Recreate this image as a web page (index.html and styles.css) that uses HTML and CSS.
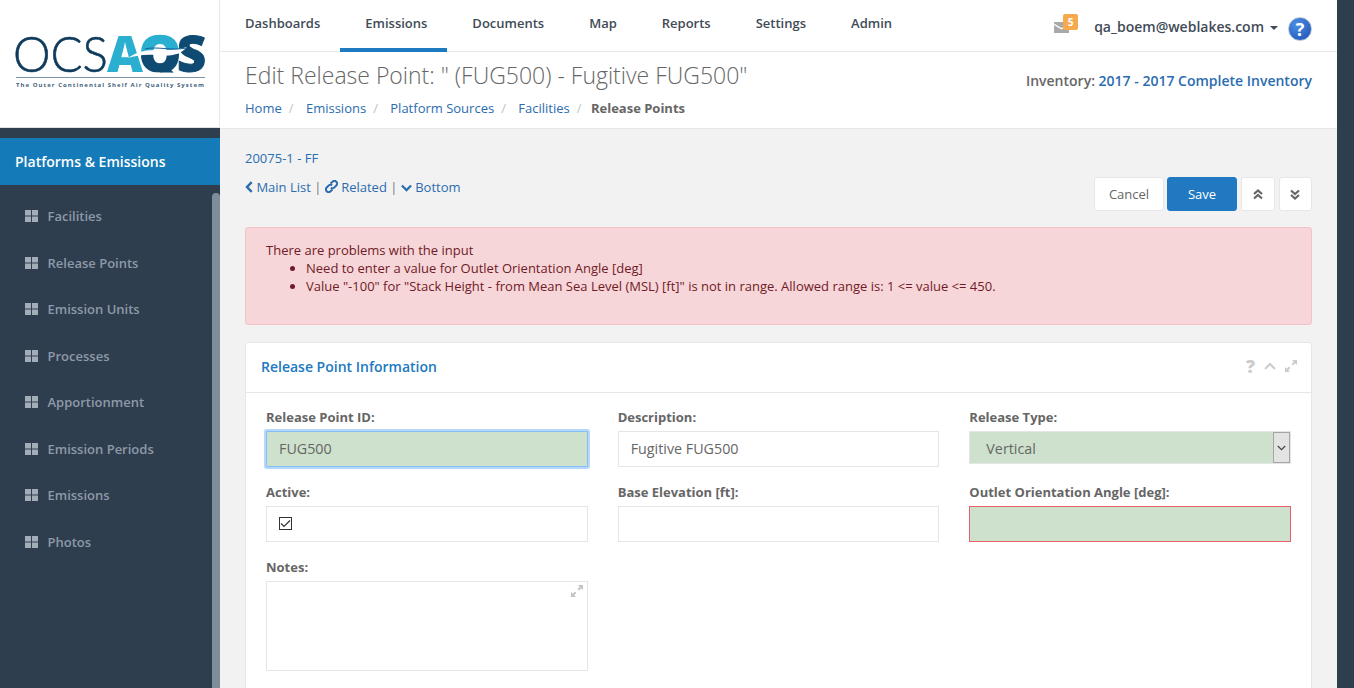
FILE: index.html

```html
<!DOCTYPE html>
<html>
<head>
  <title>Edit Release Point</title>
  <link rel="stylesheet" href="styles.css">
</head>
<body>
  <div class="app">
    <aside class="sidebar">
      <div class="logo">
        <svg width="195" height="76" viewBox="-3 0 195 76">
          <defs>
            <linearGradient id="qfill" gradientUnits="userSpaceOnUse" x1="0" y1="0" x2="0" y2="60">
              <stop offset="0.62" stop-color="#2aafd0"/>
              <stop offset="0.62" stop-color="#0e4a72"/>
            </linearGradient>
            <clipPath id="qclip"><rect x="120" y="0" width="50" height="55.500"/></clipPath>
          </defs>
          <text x="-2" y="55" class="logo-thin" textLength="95" lengthAdjust="spacingAndGlyphs">OCS</text>
          <text x="92" y="55" class="logo-a" textLength="36" lengthAdjust="spacingAndGlyphs">A</text>
          <g clip-path="url(#qclip)">
            <text x="124" y="55" class="logo-q" fill="url(#qfill)" stroke="url(#qfill)" textLength="42" lengthAdjust="spacingAndGlyphs">Q</text>
          </g>
          <text x="162" y="55" class="logo-s" textLength="29" lengthAdjust="spacingAndGlyphs">S</text>
          <path d="M113 41 C120 36 128 33 140 33 C150 33 160 34 172 30 C165 38 155 40 140 38 C130 37 120 39 113 41Z" fill="#fff"/>
          <path d="M130 32 C142 29 155 34 172 31" stroke="#1c5f9a" stroke-width="1" fill="none"/>
          <path d="M1 60.500 H190" stroke="#7d93a8" stroke-width="1"/>
          <text x="1" y="70" class="logo-tag" textLength="188">The Outer Continental Shelf Air Quality System</text>
        </svg>
      </div>
      <div class="side-body">
        <div class="side-title">Platforms &amp; Emissions</div>
        <ul class="side-menu">
          <li><svg class="grid-icon" viewBox="0 0 13 12"><path d="M0 0h6v5.500H0zM7 0h6v5.500H7zM0 6.500h6V12H0zM7 6.500h6V12H7z"/></svg>Facilities</li>
          <li><svg class="grid-icon" viewBox="0 0 13 12"><path d="M0 0h6v5.500H0zM7 0h6v5.500H7zM0 6.500h6V12H0zM7 6.500h6V12H7z"/></svg>Release Points</li>
          <li><svg class="grid-icon" viewBox="0 0 13 12"><path d="M0 0h6v5.500H0zM7 0h6v5.500H7zM0 6.500h6V12H0zM7 6.500h6V12H7z"/></svg>Emission Units</li>
          <li><svg class="grid-icon" viewBox="0 0 13 12"><path d="M0 0h6v5.500H0zM7 0h6v5.500H7zM0 6.500h6V12H0zM7 6.500h6V12H7z"/></svg>Processes</li>
          <li><svg class="grid-icon" viewBox="0 0 13 12"><path d="M0 0h6v5.500H0zM7 0h6v5.500H7zM0 6.500h6V12H0zM7 6.500h6V12H7z"/></svg>Apportionment</li>
          <li><svg class="grid-icon" viewBox="0 0 13 12"><path d="M0 0h6v5.500H0zM7 0h6v5.500H7zM0 6.500h6V12H0zM7 6.500h6V12H7z"/></svg>Emission Periods</li>
          <li><svg class="grid-icon" viewBox="0 0 13 12"><path d="M0 0h6v5.500H0zM7 0h6v5.500H7zM0 6.500h6V12H0zM7 6.500h6V12H7z"/></svg>Emissions</li>
          <li><svg class="grid-icon" viewBox="0 0 13 12"><path d="M0 0h6v5.500H0zM7 0h6v5.500H7zM0 6.500h6V12H0zM7 6.500h6V12H7z"/></svg>Photos</li>
        </ul>
        <div class="side-scroll"></div>
      </div>
    </aside>

    <div class="main">
      <nav class="topnav">
        <a class="nav-item">Dashboards</a>
        <a class="nav-item active">Emissions</a>
        <a class="nav-item">Documents</a>
        <a class="nav-item">Map</a>
        <a class="nav-item">Reports</a>
        <a class="nav-item">Settings</a>
        <a class="nav-item">Admin</a>
        <div class="nav-right">
          <span class="mail">
            <svg width="15" height="11" viewBox="0 0 15 11"><path d="M0 0h15v1.500L7.500 6 0 1.500zM0 3l7.500 4.500L15 3v8H0z" fill="#a9a9a9"/></svg>
            <span class="mail-badge">5</span>
          </span>
          <span class="user">qa_boem@weblakes.com</span>
          <span class="caret"></span>
          <span class="help">?</span>
        </div>
      </nav>

      <header class="page-head">
        <div>
          <h1>Edit Release Point: " (FUG500) - Fugitive FUG500"</h1>
          <div class="crumbs">
            <a>Home</a><span class="sep">/</span>
            <a>Emissions</a><span class="sep">/</span>
            <a>Platform Sources</a><span class="sep">/</span>
            <a>Facilities</a><span class="sep">/</span>
            <b>Release Points</b>
          </div>
        </div>
        <div class="inventory">Inventory: <a>2017 - 2017 Complete Inventory</a></div>
      </header>

      <div class="content">
        <div class="toolbar">
          <div>
            <a class="record">20075-1 - FF</a>
            <div class="links">
              <a><svg class="link-icon" width="8" height="12" viewBox="0 0 8 12"><path d="M6.700 1.200 2 6l4.700 4.800" fill="none" stroke="#2b6cb0" stroke-width="2.400"/></svg> Main List</a>
              <span class="bar">|</span>
              <a><svg class="link-icon" width="13" height="13" viewBox="0 0 13 13"><g fill="none" stroke="#2b6cb0" stroke-width="2"><path d="M5.500 3.500 7.500 1.700a2.400 2.400 0 0 1 3.800 3.800L9.200 7.600a2.400 2.400 0 0 1-3.400 0"/><path d="M7.500 9.500 5.500 11.300a2.400 2.400 0 0 1-3.800-3.800L3.800 5.400a2.400 2.400 0 0 1 3.400 0"/></g></svg> Related</a>
              <span class="bar">|</span>
              <a><svg class="link-icon" width="11" height="9" viewBox="0 0 12 9"><path d="M1 1.300 6 6.300l5-5" fill="none" stroke="#2b6cb0" stroke-width="2.400"/></svg> Bottom</a>
            </div>
          </div>
          <div class="actions">
            <button class="btn btn-cancel">Cancel</button>
            <button class="btn btn-save">Save</button>
            <button class="btn btn-icon"><svg width="10" height="11" viewBox="0 0 10 11"><path d="M1 5 5 1.500 9 5M1 9.500 5 6l4 3.500" fill="none" stroke="#666" stroke-width="2.200"/></svg></button>
            <button class="btn btn-icon"><svg width="10" height="11" viewBox="0 0 10 11"><path d="M1 1.500 5 5l4-3.500M1 6l4 3.500L9 6" fill="none" stroke="#666" stroke-width="2.200"/></svg></button>
          </div>
        </div>

        <div class="alert">
          <div>There are problems with the input</div>
          <ul>
            <li>Need to enter a value for Outlet Orientation Angle [deg]</li>
            <li>Value "-100" for "Stack Height - from Mean Sea Level (MSL) [ft]" is not in range. Allowed range is: 1 &lt;= value &lt;= 450.</li>
          </ul>
        </div>

        <section class="card">
          <div class="card-head">
            <h2>Release Point Information</h2>
            <div class="card-tools">
              <span class="tool-q">?</span>
              <svg width="12" height="8" viewBox="0 0 12 8"><path d="M1 7 6 2l5 5" fill="none" stroke="#ccc" stroke-width="2"/></svg>
              <svg width="12" height="12" viewBox="0 0 12 12"><path d="M7 0h5v5L10.200 3.200 8 5.400 6.600 4 8.800 1.800zM5 12H0V7l1.800 1.800L4 6.600 5.400 8 3.200 10.200z" fill="#ccc"/></svg>
            </div>
          </div>
          <div class="form-grid">
            <div class="field">
              <label>Release Point ID:</label>
              <div class="input input-green input-focus">FUG500</div>
            </div>
            <div class="field">
              <label>Description:</label>
              <div class="input">Fugitive FUG500</div>
            </div>
            <div class="field">
              <label>Release Type:</label>
              <div class="input input-green select">
                <span>Vertical</span>
                <span class="select-btn"><svg width="9" height="6" viewBox="0 0 9 6"><path d="M.8 1 4.500 4.700 8.200 1" fill="none" stroke="#444" stroke-width="1.200"/></svg></span>
              </div>
            </div>
            <div class="field">
              <label>Active:</label>
              <div class="input">
                <span class="check"><svg width="11" height="9" viewBox="0 0 11 9"><path d="M1 4.500 4 7.500 10 1.500" fill="none" stroke="#333" stroke-width="1.200"/></svg></span>
              </div>
            </div>
            <div class="field">
              <label>Base Elevation [ft]:</label>
              <div class="input"></div>
            </div>
            <div class="field">
              <label>Outlet Orientation Angle [deg]:</label>
              <div class="input input-green input-error"></div>
            </div>
            <div class="field">
              <label>Notes:</label>
              <div class="input textarea">
                <svg class="expand" width="12" height="12" viewBox="0 0 12 12"><path d="M7 0h5v5L10.200 3.200 8 5.400 6.600 4 8.800 1.800zM5 12H0V7l1.800 1.800L4 6.600 5.400 8 3.200 10.200z" fill="#c4c4c4"/></svg>
              </div>
            </div>
          </div>
        </section>
      </div>
    </div>

    <div class="right-strip"></div>
  </div>
</body>
</html>
```

FILE: styles.css

```css
* {
  box-sizing: border-box;
}

html, body {
  margin: 0;
  height: 688px;
  overflow: hidden;
}

body {
  font-family: "Open Sans", Arial, sans-serif;
  font-size: 13px;
  color: #666;
  background: #f2f2f2;
}

a {
  color: #2b6cb0;
  text-decoration: none;
}

.app {
  display: flex;
  height: 688px;
  overflow: hidden;
}

/* sidebar */
.sidebar {
  width: 220px;
  flex-shrink: 0;
  background: #2f3e4e;
}

.logo {
  height: 128px;
  background: #fff;
  border-right: 1px solid #e7e7e7;
  border-bottom: 1px solid #e0e0e0;
  padding: 17px 0 0 12px;
}

.logo-thin {
  font-family: "Lato", sans-serif;
  font-weight: 300;
  font-size: 50px;
  fill: #0e3a5c;
  stroke: #0e3a5c;
  stroke-width: 0.6px;
}

.logo-a {
  font-family: "Open Sans", sans-serif;
  font-weight: 800;
  font-size: 50px;
  fill: #2aafd0;
}

.logo-q {
  font-family: "Open Sans", sans-serif;
  font-weight: 800;
  font-size: 50px;
  stroke-width: 1.500px;
}

.logo-s {
  font-family: "Open Sans", sans-serif;
  font-weight: 800;
  font-size: 50px;
  fill: #0e4a72;
  stroke: #0e4a72;
  stroke-width: 1px;
}

.logo-tag {
  font-family: "Open Sans", sans-serif;
  font-weight: 700;
  font-size: 6px;
  fill: #3f5f7d;
}

.side-body {
  position: relative;
  padding-top: 10px;
}

.side-title {
  height: 47px;
  line-height: 47px;
  padding-left: 15px;
  background: #147ab8;
  color: #fff;
  font-size: 14px;
  font-weight: 600;
}

.side-menu {
  list-style: none;
  margin: 0;
  padding: 8px 0 0 25px;
}

.side-menu li {
  display: flex;
  align-items: center;
  height: 46.500px;
  color: #8d99a8;
  font-size: 13px;
  font-weight: 600;
}

.grid-icon {
  width: 13px;
  height: 12px;
  margin-right: 9.500px;
  fill: #a3adb8;
}

.side-scroll {
  position: absolute;
  top: 65px;
  right: 0;
  width: 8px;
  height: 520px;
  background: #7d8e9a;
  border-radius: 4px 4px 0 0;
}

/* main column */
.main {
  width: 1117px;
  flex-shrink: 0;
}

.topnav {
  display: flex;
  align-items: stretch;
  height: 52px;
  background: #fff;
  border-bottom: 1px solid #e7e7e7;
}

.nav-item {
  padding: 14px 20px 0 25px;
  color: #3f4b57;
  font-size: 13px;
  font-weight: 600;
  border-bottom: 4px solid transparent;
  margin-bottom: -1px;
}

.nav-item.active {
  border-bottom-color: #1f7bc1;
}

.nav-right {
  display: flex;
  align-items: center;
  margin-left: auto;
  padding-right: 25px;
}

.mail {
  position: relative;
  display: flex;
  margin-right: 25px;
  margin-top: 4px;
}

.mail-badge {
  position: absolute;
  top: -8px;
  left: 9px;
  width: 15px;
  height: 16px;
  border-radius: 2px;
  background: #f6a94d;
  color: #fff;
  font-size: 10px;
  font-weight: 700;
  line-height: 16px;
  text-align: center;
}

.user {
  margin-top: 2px;
  color: #3f4b57;
  font-size: 14px;
  font-weight: 600;
}

.caret {
  width: 0;
  height: 0;
  margin: 5px 10px 0 6px;
  border-left: 4px solid transparent;
  border-right: 4px solid transparent;
  border-top: 4px solid #3f4b57;
}

.help {
  width: 24px;
  height: 24px;
  margin-top: 7px;
  border-radius: 50%;
  background: radial-gradient(circle at 35% 30%, #4d8fe6, #1b4fb0);
  border: 1px solid #b9c6da;
  color: #fff;
  font-size: 18px;
  font-weight: 700;
  line-height: 22px;
  text-align: center;
}

.page-head {
  display: flex;
  justify-content: space-between;
  height: 77px;
  padding: 8px 25px;
  background: #fff;
  border-bottom: 1px solid #e7e7e7;
}

.page-head h1 {
  margin: 0;
  color: #666;
  font-size: 23px;
  font-weight: 300;
  line-height: 30px;
}

.crumbs {
  margin-top: 9px;
  font-size: 13px;
  line-height: 18px;
}

.crumbs b {
  margin-left: -3px;
  color: #666;
  font-weight: 700;
}

.sep {
  margin: 0 9px 0 7px;
  color: #c4c4c4;
}

.inventory {
  margin-top: 11px;
  font-size: 14px;
  font-weight: 600;
}

.content {
  padding: 20px 25px 0;
}

.toolbar {
  display: flex;
  justify-content: space-between;
  height: 78px;
}

.record {
  display: block;
  font-size: 13px;
  line-height: 18px;
}

.links {
  margin-top: 11px;
  font-size: 13px;
  line-height: 18px;
}

.link-icon {
  vertical-align: -1px;
}

.bar {
  color: #777;
}

.actions {
  display: flex;
  align-items: flex-start;
  gap: 3px;
  padding-top: 28px;
}

.btn {
  height: 34px;
  padding: 0;
  background: #fff;
  border: 1px solid #e7e7e7;
  border-radius: 3px;
  color: #666;
  font-family: inherit;
  font-size: 13px;
}

.btn-cancel {
  width: 70px;
}

.btn-save {
  width: 70px;
  background: #2079c1;
  border-color: #2079c1;
  color: #fff;
}

.btn-icon {
  display: flex;
  align-items: center;
  justify-content: center;
  width: 33.500px;
  margin-left: 1px;
}

.alert {
  height: 98px;
  padding: 13px 20px;
  background: #f7d6d9;
  border: 1px solid #f2c4c9;
  border-radius: 3px;
  color: #6f1a26;
  font-size: 13px;
  line-height: 18px;
}

.alert ul {
  margin: 0;
  padding-left: 40px;
}

.card {
  margin-top: 17px;
  height: 400px;
  background: #fff;
  border: 1px solid #e7e7e7;
  border-radius: 3px 3px 0 0;
}

.card-head {
  display: flex;
  align-items: center;
  justify-content: space-between;
  height: 50px;
  padding: 0 14px 3px 15px;
  border-bottom: 1px solid #e7e7e7;
}

.card-head h2 {
  margin: 0;
  color: #2079c1;
  font-size: 14px;
  font-weight: 600;
}

.card-tools {
  display: flex;
  align-items: center;
  gap: 9px;
}

.tool-q {
  color: #ccc;
  font-size: 18px;
  font-weight: 800;
  line-height: 16px;
}

.form-grid {
  display: grid;
  grid-template-columns: repeat(3, 1fr);
  column-gap: 30px;
  padding: 14px 20px 0;
  align-items: start;
}

.field {
  margin-bottom: 15px;
}

.field label {
  display: block;
  height: 24px;
  color: #666;
  font-size: 13px;
  font-weight: 700;
  line-height: 20px;
}

.input {
  display: flex;
  align-items: center;
  height: 36px;
  padding: 0 12px 2px;
  background: #fff;
  border: 1px solid #e5e5e5;
  color: #666;
  font-size: 14.300px;
}

.input-green {
  background: #cde1cc;
}

.input-focus {
  border-color: #85bdf5;
  box-shadow: 0 0 0 2px #b5d8fb;
  border-radius: 1px;
}

.input-error {
  border-color: #e8606a;
}

.select {
  justify-content: space-between;
  height: 33px;
  padding: 0 0 0 16px;
}

.select > span:first-child {
  margin-top: 2px;
}

.select-btn {
  display: flex;
  align-items: center;
  justify-content: center;
  width: 17px;
  height: 31px;
  background: #e3e3e3;
  border: 1px solid #a5a5a5;
}

.check {
  display: flex;
  align-items: center;
  justify-content: center;
  width: 13px;
  height: 13px;
  border: 1px solid #333;
}

.textarea {
  position: relative;
  height: 90px;
}

.expand {
  position: absolute;
  top: 3px;
  right: 4px;
}

.right-strip {
  flex: 1;
  background: #2f3e4e;
}
```
